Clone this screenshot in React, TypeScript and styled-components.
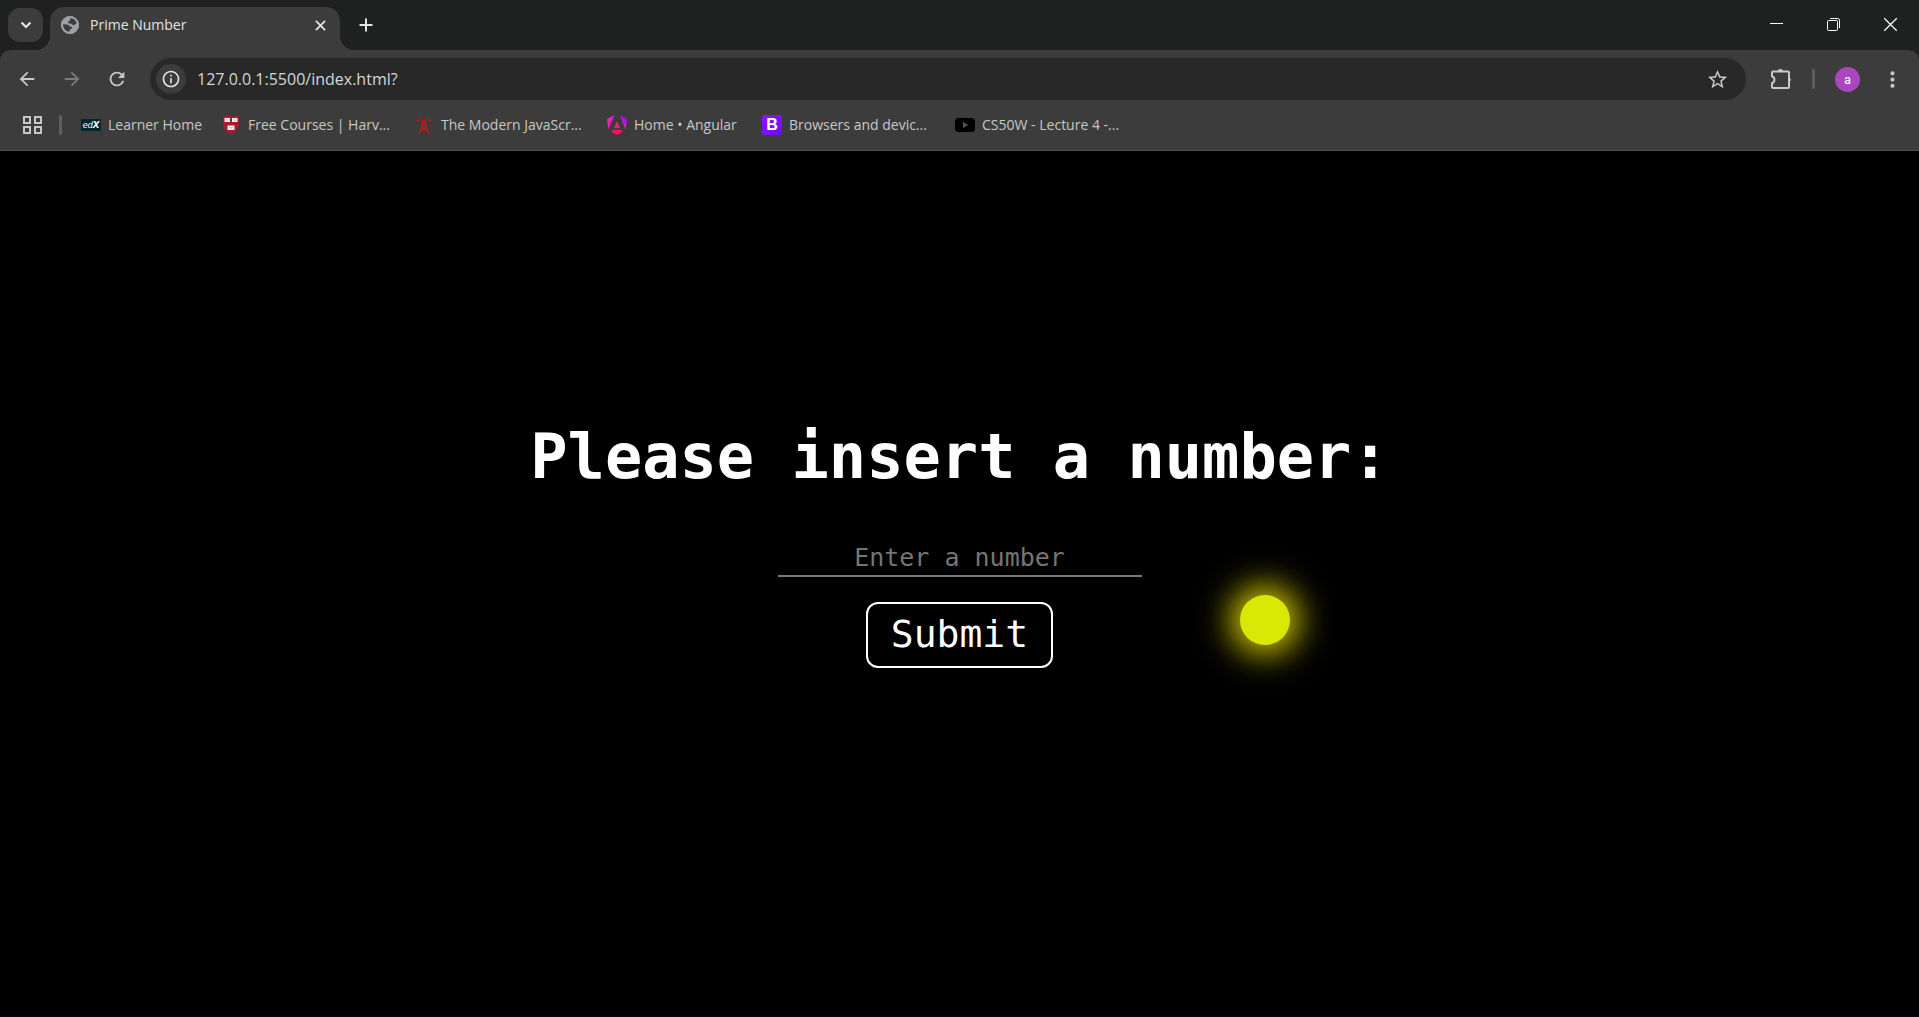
import React from "react";
import styled, { createGlobalStyle, css } from "styled-components";
import { MdArrowBack, MdArrowForward, MdRefresh, MdStarBorder, MdMoreVert, MdInfoOutline } from "react-icons/md";

const color = {
  strip: "#1f2120",
  chrome: "#3c3c3c",
  field: "#282828",
  icon: "#c7c7c7",
  text: "#c7c7c7",
  bright: "#e3e3e3",
  divider: "#5e5e5e",
};

const GlobalStyle = createGlobalStyle`
  *, *::before, *::after { box-sizing: border-box; }
  body { margin: 0; background: #000; font-family: "Open Sans", "Noto Sans", sans-serif; }
  button, input { font-family: inherit; }
`;

const Window = styled.div`
  display: flex;
  flex-direction: column;
  min-height: 100vh;
  background: ${color.strip};
`;

const resetButton = css`
  display: flex;
  align-items: center;
  justify-content: center;
  flex: none;
  border: 0;
  padding: 0;
  background: transparent;
  color: ${color.icon};
`;

const TabStrip = styled.header`
  display: flex;
  height: 50px;
  padding-left: 8px;
`;

const TabSearch = styled.button`
  ${resetButton}
  width: 35px;
  height: 34px;
  margin: 8px 7px 0 0;
  border-radius: 12px;
  background: ${color.chrome};
  color: ${color.bright};
`;

const Tab = styled.div`
  position: relative;
  display: flex;
  align-items: center;
  gap: 11px;
  width: 290px;
  height: 43px;
  margin-top: 7px;
  padding: 0 10px 7px 11px;
  border-radius: 14px 14px 0 0;
  background: ${color.chrome};
  color: ${color.bright};
  font-size: 14px;
  line-height: 20px;

  &::before,
  &::after {
    content: "";
    position: absolute;
    bottom: 0;
    width: 14px;
    height: 14px;
  }
  &::before {
    right: 100%;
    background: radial-gradient(circle at 0 0, transparent 14px, ${color.chrome} 14px);
  }
  &::after {
    left: 100%;
    background: radial-gradient(circle at 100% 0, transparent 14px, ${color.chrome} 14px);
  }
`;

const TabTitle = styled.span`
  flex: 1;
`;

const TabButton = styled.button`
  ${resetButton}
  width: 20px;
  height: 20px;
  color: ${color.bright};
`;

const NewTab = styled(TabButton)`
  margin: 15px 0 0 16px;
`;

const WindowControls = styled.div`
  display: flex;
  height: 49px;
  margin-left: auto;
`;

const WindowButton = styled.button`
  ${resetButton}
  width: 57px;
  color: #fff;
`;

const Toolbar = styled.nav`
  display: flex;
  align-items: center;
  height: 58px;
  padding: 0 12px;
  border-radius: 10px 10px 0 0;
  background: ${color.chrome};
`;

const ToolButton = styled.button<{ $dim?: boolean }>`
  ${resetButton}
  width: 30px;
  height: 30px;
  margin-right: 15px;
  color: ${(p) => (p.$dim ? "#7b7b7b" : color.icon)};
`;

const Omnibox = styled.label`
  display: flex;
  flex: 1;
  align-items: center;
  height: 42px;
  margin-left: 3px;
  padding: 0 14px 0 6px;
  border-radius: 21px;
  background: ${color.field};
`;

const SiteInfo = styled.button`
  ${resetButton}
  width: 30px;
  height: 30px;
  border-radius: 50%;
  background: ${color.chrome};
  color: ${color.bright};
`;

const Address = styled.input`
  flex: 1;
  min-width: 0;
  height: 24px;
  margin-left: 11px;
  padding: 0;
  border: 0;
  outline: 0;
  background: transparent;
  color: #d6d6d6;
  font-size: 16px;
`;

const IconButton = styled.button`
  ${resetButton}
  width: 30px;
  height: 30px;
`;

const ToolbarEnd = styled.div`
  display: flex;
  align-items: center;
  gap: 16px;
  margin-left: 20px;
`;

const Divider = styled.span`
  flex: none;
  width: 3px;
  height: 20px;
  border-radius: 2px;
  background: ${color.divider};
`;

const Avatar = styled.button`
  ${resetButton}
  width: 25px;
  height: 25px;
  margin: 0 17px 0 20px;
  border-radius: 50%;
  background: #ab47bc;
  color: #fff;
  font-family: Roboto, sans-serif;
  font-size: 13px;
`;

const BookmarksBar = styled.nav`
  display: flex;
  align-items: center;
  gap: 19px;
  height: 43px;
  padding: 0 22px 8px;
  border-bottom: 1px solid #4a4a4a;
  background: ${color.chrome};
`;

const AppsButton = styled.button`
  ${resetButton}
  width: 20px;
  height: 20px;
  margin-right: -2px;
`;

const Bookmark = styled.a`
  display: flex;
  align-items: center;
  gap: 7px;
  color: ${color.text};
  font-size: 14px;
  line-height: 20px;
  text-decoration: none;
  white-space: nowrap;
`;

const BookmarkIcon = styled.span`
  display: flex;
  width: 20px;
  height: 20px;
`;

const BookmarkName = styled.span<{ $size: "short" | "medium" | "long" }>`
  width: ${(p) => ({ short: "auto", medium: "109px", long: "147px" })[p.$size]};
`;

const BootstrapMark = styled.span`
  width: 20px;
  border-radius: 3px;
  background: linear-gradient(135deg, #9013fe, #6610f2);
  color: #fff;
  font: 700 16px/20px "Liberation Sans", sans-serif;
  text-align: center;
`;

const EdxMark = styled.span`
  width: 20px;
  height: 12px;
  margin-top: 4px;
  background: #03262c;
  color: #fff;
  font: italic 400 9px/11px "Liberation Sans", sans-serif;
  text-align: center;

  b {
    font-size: 12px;
  }
`;

const Page = styled.main`
  position: relative;
  display: flex;
  flex: 1;
  flex-direction: column;
  align-items: center;
  padding-top: 266px;
  border-bottom: 1px solid #14000a;
  background: #000;
  color: #fff;
  font-family: "DejaVu Sans Mono", monospace;
`;

const Heading = styled.h1`
  margin: 0 0 44px;
  font-size: 62px;
  line-height: 80px;
`;

const NumberForm = styled.form`
  display: flex;
  flex-direction: column;
  align-items: center;
  gap: 25px;
`;

const NumberInput = styled.input`
  width: 364px;
  height: 36px;
  padding: 0 0 2px;
  border: 0;
  border-bottom: 2px solid #767676;
  outline: 0;
  background: transparent;
  color: #fff;
  font-size: 25px;
  text-align: center;

  &::placeholder {
    color: #757575;
  }
`;

const Submit = styled.button`
  height: 66px;
  padding: 0 23px 2px;
  border: 2px solid #fff;
  border-radius: 12px;
  background: #000;
  color: #fff;
  font-size: 38px;
`;

const Ball = styled.div`
  position: absolute;
  top: 444px;
  left: 1240px;
  width: 50px;
  height: 50px;
  border-radius: 50%;
  background: #d9e805;
  box-shadow: 0 0 32px 10px #ccc400;
`;

const Globe = () => (
  <svg width="18" height="18" viewBox="0 0 18 18" aria-hidden="true">
    <circle cx="9" cy="9" r="9" fill="#9aa0a6" />
    <path d="M9 2.2 L12.8 2.6 Q15.6 4.4 16 8 L14.6 7.4 Q13.6 9.4 11.4 8.8 Q10.6 7.4 9 7.6 Q7 7.6 7 6 Q7.4 4.8 9.2 4.6 Z" fill={color.chrome} />
    <path d="M2 8.2 L6 8.4 Q8.4 8.8 8.6 10.6 L10.6 10.8 Q11.6 11.4 10.6 12.8 L8.8 13.6 Q8.8 15.2 7.8 16 Q3 14.8 2 10 Z" fill={color.chrome} />
    <circle cx="9" cy="9" r="8" fill="none" stroke="#9aa0a6" strokeWidth="2" />
  </svg>
);

const Cross = ({ size, width }: { size: number; width: number }) => (
  <svg width={size} height={size} viewBox="0 0 12 12" fill="none" stroke="currentColor" strokeWidth={width} aria-hidden="true">
    <path d="M1 1 L11 11 M11 1 L1 11" />
  </svg>
);

const Puzzle = () => (
  <svg width="24" height="24" viewBox="0 0 24 24" fill="none" aria-hidden="true">
    <path d="M4 4.5 H19 Q20 4.5 20 5.5 V20 Q20 21 19 21 H4 Q3 21 3 20 V16.3 A3.8 3.8 0 0 0 3 9.2 V5.5 Q3 4.5 4 4.5 Z" stroke="currentColor" strokeWidth="2" />
    <path d="M8.8 4 A2.8 2.8 0 0 1 14.2 4 Z M20.3 10.2 A2.8 2.8 0 0 1 20.3 15.2 Z" fill="currentColor" />
  </svg>
);

const AppsGrid = () => (
  <svg width="20" height="20" viewBox="0 0 20 20" fill="none" stroke="currentColor" strokeWidth="2" aria-hidden="true">
    <path d="M2 2h6v6h-6z M13 2h6v6h-6z M2 12h6v6h-6z M13 12h6v6h-6z" />
  </svg>
);

const Shield = () => (
  <svg width="20" height="20" viewBox="0 0 20 20" aria-hidden="true">
    <path d="M2 1 H18 V8 Q18 16 10 19.5 Q2 16 2 8 Z" fill="#a51c30" />
    <path d="M3.5 3 H9 V7 H3.5 Z M11 3 H16.5 V7 H11 Z M6.5 10.5 H13.5 V15 H6.5 Z" fill="#eee" />
    <path d="M5 5 H7.5 M12.5 5 H15 M8 12.8 H12" stroke="#777" strokeOpacity=".5" />
  </svg>
);

const Antenna = () => (
  <svg width="20" height="20" viewBox="0 0 20 20" fill="none" stroke="#c4161c" aria-hidden="true">
    <path d="M9 7 L5.5 19 M11 7 L14.5 19 M7.5 12 L13.5 16 M12.5 12 L6.5 16 M8 10 H12" strokeWidth="1.3" />
    <circle cx="10" cy="6.5" r="1.5" strokeWidth="1.3" />
    <path d="M7 4.5 L4.5 1 M13 4.5 L15.5 1 M6 6.5 L2 5 M14 6.5 L18 5" />
  </svg>
);

const AngularMark = () => (
  <svg width="20" height="20" viewBox="0 0 20 20" aria-hidden="true">
    <defs>
      <linearGradient id="angular" x1="0" y1="1" x2="1" y2="0">
        <stop offset="0" stopColor="#f0209b" />
        <stop offset=".5" stopColor="#f020c0" />
        <stop offset="1" stopColor="#7702ff" />
      </linearGradient>
      <linearGradient id="angularBase" x1="0" y1="0" x2="0" y2="1">
        <stop offset="0" stopColor="#e0309a" />
        <stop offset="1" stopColor="#ff0a50" />
      </linearGradient>
    </defs>
    <path d="M7.5 0 L1.3 14.5 L0 4 Z M12.5 0 L18.7 14.5 L20 4 Z" fill="url(#angular)" />
    <path d="M10 6.5 L13 13 H7 Z M5.5 15 H14.5 L15.3 17 L10 20 L4.7 17 Z" fill="url(#angularBase)" />
  </svg>
);

const VideoMark = () => (
  <svg width="20" height="20" viewBox="0 0 20 20" aria-hidden="true">
    <rect y="3" width="20" height="14" rx="3.5" fill="#000" />
    <path d="M8 7 L13 10 L8 13 Z" fill="#555" />
  </svg>
);

const bookmarks = [
  { name: "Learner Home", icon: <EdxMark>ed<b>x</b></EdxMark>, size: "short" },
  { name: "Free Courses | Harv...", icon: <Shield />, size: "long" },
  { name: "The Modern JavaScr...", icon: <Antenna />, size: "long" },
  { name: "Home • Angular", icon: <AngularMark />, size: "medium" },
  { name: "Browsers and devic...", icon: <BootstrapMark>B</BootstrapMark>, size: "long" },
  { name: "CS50W - Lecture 4 -...", icon: <VideoMark />, size: "long" },
] as const;

export default function App() {
  return (
    <Window>
      <GlobalStyle />
      <TabStrip>
        <TabSearch aria-label="Search tabs">
          <svg width="12" height="8" viewBox="0 0 12 8" fill="none" stroke="currentColor" strokeWidth="2.2" aria-hidden="true">
            <path d="M1.5 1.5 L6 6 L10.5 1.5" />
          </svg>
        </TabSearch>
        <Tab>
          <Globe />
          <TabTitle>Prime Number</TabTitle>
          <TabButton aria-label="Close tab">
            <Cross size={11} width={2} />
          </TabButton>
        </Tab>
        <NewTab aria-label="New tab">
          <svg width="14" height="14" viewBox="0 0 14 14" stroke="currentColor" strokeWidth="2" aria-hidden="true">
            <path d="M7 0.5 V13.5 M0.5 7 H13.5" />
          </svg>
        </NewTab>
        <WindowControls>
          <WindowButton aria-label="Minimize">
            <svg width="13" height="13" viewBox="0 0 13 13" aria-hidden="true">
              <path d="M0 5.5 H13" stroke="currentColor" />
            </svg>
          </WindowButton>
          <WindowButton aria-label="Restore">
            <svg width="13" height="13" viewBox="0 0 13 13" fill="none" stroke="currentColor" aria-hidden="true">
              <rect x=".5" y="2.5" width="10" height="10" rx="1" />
              <path d="M3 .5 H10.5 Q12.5 .5 12.5 2.5 V10" />
            </svg>
          </WindowButton>
          <WindowButton aria-label="Close">
            <Cross size={15} width={1} />
          </WindowButton>
        </WindowControls>
      </TabStrip>

      <Toolbar aria-label="Browser toolbar">
        <ToolButton aria-label="Back"><MdArrowBack size={22} /></ToolButton>
        <ToolButton aria-label="Forward" $dim><MdArrowForward size={22} /></ToolButton>
        <ToolButton aria-label="Reload"><MdRefresh size={22} /></ToolButton>
        <Omnibox>
          <SiteInfo aria-label="Site information"><MdInfoOutline size={20} /></SiteInfo>
          <Address aria-label="Address" defaultValue="127.0.0.1:5500/index.html?" />
          <IconButton aria-label="Bookmark this page"><MdStarBorder size={23} /></IconButton>
        </Omnibox>
        <ToolbarEnd>
          <IconButton aria-label="Extensions"><Puzzle /></IconButton>
          <Divider />
        </ToolbarEnd>
        <Avatar aria-label="Profile">a</Avatar>
        <IconButton aria-label="Menu"><MdMoreVert size={25} /></IconButton>
      </Toolbar>

      <BookmarksBar aria-label="Bookmarks">
        <AppsButton aria-label="Apps"><AppsGrid /></AppsButton>
        <Divider />
        {bookmarks.map((b) => (
          <Bookmark key={b.name} href="#">
            <BookmarkIcon>{b.icon}</BookmarkIcon>
            <BookmarkName $size={b.size}>{b.name}</BookmarkName>
          </Bookmark>
        ))}
      </BookmarksBar>

      <Page>
        <Heading>Please insert a number:</Heading>
        <NumberForm onSubmit={(e: React.FormEvent) => e.preventDefault()}>
          <NumberInput aria-label="Number" placeholder="Enter a number" />
          <Submit type="submit">Submit</Submit>
        </NumberForm>
        <Ball />
      </Page>
    </Window>
  );
}
